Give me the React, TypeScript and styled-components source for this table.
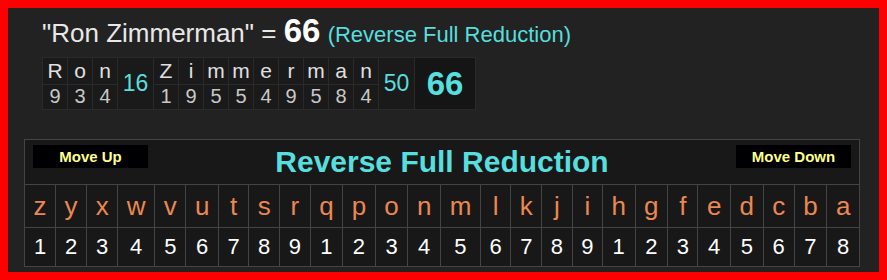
import React from "react";
import styled, { createGlobalStyle } from "styled-components";

const GlobalStyle = createGlobalStyle`
  html, body { margin: 0; padding: 0; background: #ff0000; }
  body { font-family: "Liberation Sans", Arial, sans-serif; }
`;

const CYAN = "#57dede";
const ORANGE = "#ec8752";

const Frame = styled.div`
  box-sizing: border-box;
  width: 887px;
  height: 280px;
  border: 8px solid #ff0000;
  background: #222222;
  overflow: hidden;
`;

const Header = styled.div`
  padding: 6px 0 0 34px;
`;

const Title = styled.div`
  font-size: 26px;
  line-height: 34px;
  color: #e8e8e8;
  white-space: nowrap;
`;

const TitleTotal = styled.span`
  font-size: 33px;
  font-weight: bold;
  color: #ffffff;
`;

const TitleCipher = styled.span`
  font-size: 22px;
  color: ${CYAN};
`;

const Breakdown = styled.table`
  margin-top: 5px;
  border-collapse: collapse;
  background: #1a1a1a;
`;

const BLetter = styled.td`
  width: 24px;
  padding: 0;
  border: 1px solid #2a2a2a;
  text-align: center;
  font-size: 21px;
  line-height: 26px;
  color: #e0e0e0;
`;

const BNumber = styled.td`
  width: 24px;
  padding: 0 0 2px;
  border: 1px solid #2a2a2a;
  text-align: center;
  font-size: 20px;
  line-height: 22px;
  color: #c8c8c8;
`;

const BSum = styled.td<{ $w: number; $final?: boolean }>`
  width: ${(p) => p.$w}px;
  padding: 0;
  border: 1px solid #2a2a2a;
  text-align: center;
  vertical-align: middle;
  color: ${CYAN};
  font-size: ${(p) => (p.$final ? "33px" : "23px")};
  font-weight: ${(p) => (p.$final ? "bold" : "normal")};
  background: ${(p) => (p.$final ? "#151515" : "#1a1a1a")};
`;

const Chart = styled.table`
  margin: 29px 0 0 16px;
  width: 836px;
  border-collapse: collapse;
  background: #181818;
  border: 1px solid #444444;
`;

const HeadCell = styled.td`
  padding: 4px 8px 5px;
  border: 1px solid #444444;
`;

const HeadBar = styled.div`
  display: flex;
  justify-content: space-between;
  align-items: flex-start;
`;

const MoveButton = styled.button`
  width: 115px;
  height: 23px;
  margin-top: 1px;
  padding: 0;
  border: none;
  background: #000003;
  color: #ffff8c;
  font-family: "Liberation Sans", Arial, sans-serif;
  font-size: 15px;
  font-weight: bold;
  cursor: pointer;
`;

const ChartTitle = styled.div`
  font-size: 30px;
  line-height: 35px;
  font-weight: bold;
  color: ${CYAN};
`;

const LetterCell = styled.td`
  padding: 6px 8px;
  border: 1px solid #444444;
  text-align: center;
  font-size: 26px;
  line-height: 30px;
  color: ${ORANGE};
`;

const ValueCell = styled.td`
  padding: 6px 8px;
  border: 1px solid #444444;
  text-align: center;
  font-size: 22px;
  line-height: 26px;
  color: #ffffff;
`;

const rfr = (ch: string) => {
  const i = ch.toLowerCase().charCodeAt(0) - 97;
  return ((25 - i) % 9) + 1;
};

const name = "Ron Zimmerman";
const words = name.split(" ");
const total = words.reduce((s, w) => s + [...w].reduce((a, c) => a + rfr(c), 0), 0);
const alphabet = "zyxwvutsrqponmlkjihgfedcba".split("");

export default function App() {
  return (
    <>
      <GlobalStyle />
      <Frame>
        <Header>
          <Title>
            "{name}" = <TitleTotal>{total}</TitleTotal>{" "}
            <TitleCipher>(Reverse Full Reduction)</TitleCipher>
          </Title>
          <Breakdown>
            <tbody>
              <tr>
                {words.map((w) => (
                  <React.Fragment key={w}>
                    {[...w].map((c, i) => (
                      <BLetter key={i}>{c}</BLetter>
                    ))}
                    <BSum rowSpan={2} $w={35}>
                      {[...w].reduce((a, c) => a + rfr(c), 0)}
                    </BSum>
                  </React.Fragment>
                ))}
                <BSum rowSpan={2} $w={60} $final>
                  {total}
                </BSum>
              </tr>
              <tr>
                {words.map((w) => (
                  <React.Fragment key={w}>
                    {[...w].map((c, i) => (
                      <BNumber key={i}>{rfr(c)}</BNumber>
                    ))}
                  </React.Fragment>
                ))}
              </tr>
            </tbody>
          </Breakdown>
        </Header>
        <Chart>
          <tbody>
            <tr>
              <HeadCell colSpan={26}>
                <HeadBar>
                  <MoveButton>Move Up</MoveButton>
                  <ChartTitle>Reverse Full Reduction</ChartTitle>
                  <MoveButton>Move Down</MoveButton>
                </HeadBar>
              </HeadCell>
            </tr>
            <tr>
              {alphabet.map((c) => (
                <LetterCell key={c}>{c}</LetterCell>
              ))}
            </tr>
            <tr>
              {alphabet.map((c) => (
                <ValueCell key={c}>{rfr(c)}</ValueCell>
              ))}
            </tr>
          </tbody>
        </Chart>
      </Frame>
    </>
  );
}
